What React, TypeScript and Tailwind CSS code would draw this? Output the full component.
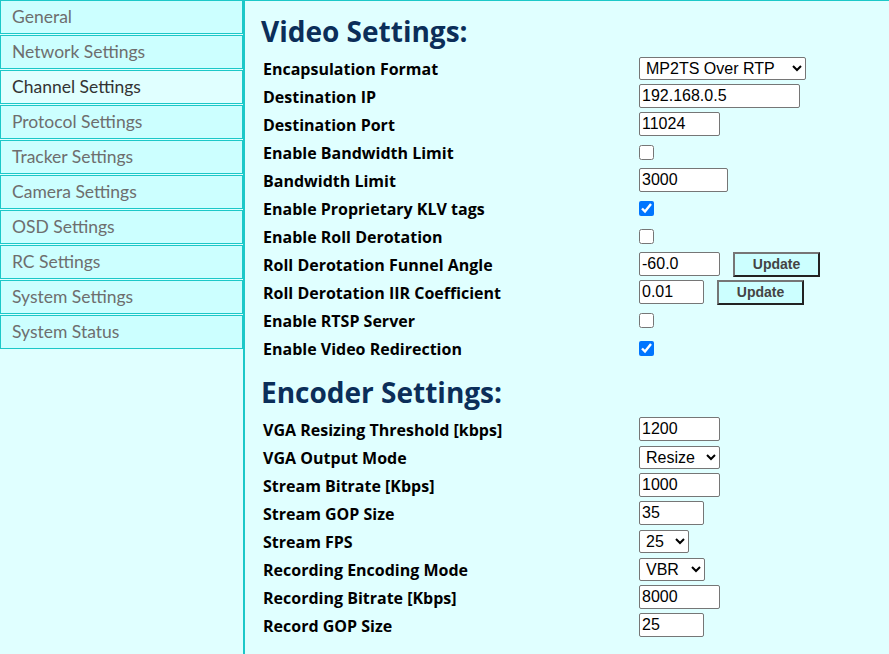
import React from "react";

const menu = [
  "General",
  "Network Settings",
  "Channel Settings",
  "Protocol Settings",
  "Tracker Settings",
  "Camera Settings",
  "OSD Settings",
  "RC Settings",
  "System Settings",
  "System Status",
];

type Field =
  | { kind: "text"; value: string; w: string; button?: boolean }
  | { kind: "select"; value: string; w: string }
  | { kind: "check"; checked: boolean };

type Row = { label: string; field: Field };

const videoRows: Row[] = [
  { label: "Encapsulation Format", field: { kind: "select", value: "MP2TS Over RTP", w: "w-[167px]" } },
  { label: "Destination IP", field: { kind: "text", value: "192.168.0.5", w: "w-[161px]" } },
  { label: "Destination Port", field: { kind: "text", value: "11024", w: "w-[81px]" } },
  { label: "Enable Bandwidth Limit", field: { kind: "check", checked: false } },
  { label: "Bandwidth Limit", field: { kind: "text", value: "3000", w: "w-[89px]" } },
  { label: "Enable Proprietary KLV tags", field: { kind: "check", checked: true } },
  { label: "Enable Roll Derotation", field: { kind: "check", checked: false } },
  { label: "Roll Derotation Funnel Angle", field: { kind: "text", value: "-60.0", w: "w-[81px]", button: true } },
  { label: "Roll Derotation IIR Coefficient", field: { kind: "text", value: "0.01", w: "w-[65px]", button: true } },
  { label: "Enable RTSP Server", field: { kind: "check", checked: false } },
  { label: "Enable Video Redirection", field: { kind: "check", checked: true } },
];

const encoderRows: Row[] = [
  { label: "VGA Resizing Threshold [kbps]", field: { kind: "text", value: "1200", w: "w-[81px]" } },
  { label: "VGA Output Mode", field: { kind: "select", value: "Resize", w: "w-[81px]" } },
  { label: "Stream Bitrate [Kbps]", field: { kind: "text", value: "1000", w: "w-[81px]" } },
  { label: "Stream GOP Size", field: { kind: "text", value: "35", w: "w-[65px]" } },
  { label: "Stream FPS", field: { kind: "select", value: "25", w: "w-[50px]" } },
  { label: "Recording Encoding Mode", field: { kind: "select", value: "VBR", w: "w-[66px]" } },
  { label: "Recording Bitrate [Kbps]", field: { kind: "text", value: "8000", w: "w-[81px]" } },
  { label: "Record GOP Size", field: { kind: "text", value: "25", w: "w-[65px]" } },
];

function FieldCell({ field }: { field: Field }) {
  if (field.kind === "check") {
    return (
      <input
        type="checkbox"
        defaultChecked={field.checked}
        className="w-[15px] h-[15px] m-0 accent-[#0075ff]"
      />
    );
  }
  if (field.kind === "select") {
    return (
      <select
        defaultValue={field.value}
        className={`${field.w} h-[23px] border border-[#767676] rounded-[2px] bg-white text-black text-[16px] pl-[2px]`}
      >
        <option>{field.value}</option>
      </select>
    );
  }
  return (
    <div className="flex items-center gap-[13px]">
      <input
        type="text"
        defaultValue={field.value}
        className={`${field.w} h-[24px] border border-[#767676] rounded-[2px] bg-white text-black text-[16px] px-[2px] outline-none`}
      />
      {field.button && (
        <button className="w-[87px] h-[25px] bg-[#ccffff] border-2 border-t-[#767676] border-l-[#767676] border-r-[#222] border-b-[#222] text-[14px] font-semibold text-[#444]">
          Update
        </button>
      )}
    </div>
  );
}

function Section({ title, rows }: { title: string; rows: Row[] }) {
  return (
    <div>
      <h2 className="h-[38px] flex items-center text-[28px] font-bold text-[#0b2e59] leading-none font-['Open_Sans',sans-serif]">
        {title}
      </h2>
      <div className="mt-[4px]">
        {rows.map((r) => (
          <div key={r.label} className="h-[28px] flex items-center">
            <div className="w-[378px] pl-[2px] pt-[1px] text-[16px] font-bold text-black font-['Open_Sans',sans-serif]">
              {r.label}
            </div>
            <FieldCell field={r.field} />
          </div>
        ))}
      </div>
    </div>
  );
}

export default function App() {
  return (
    <div className="w-[889px] h-[654px] flex bg-[#e0ffff] overflow-hidden font-['Liberation_Sans',Arial,sans-serif]">
      <div className="w-[243px] shrink-0">
        {menu.map((m) => (
          <div
            key={m}
            className={`h-[34px] mb-[1px] flex items-center pl-[11px] border border-[#1cc8c8] text-[17.5px] font-['Lato',sans-serif] ${
              m === "Channel Settings" ? "bg-[#e0ffff] text-[#333]" : "bg-[#ccffff] text-[#6e6e6e]"
            }`}
          >
            {m}
          </div>
        ))}
      </div>
      <div className="flex-1 border-l-2 border-t border-[#1cc8c8] pl-[16px] pt-[11px]">
        <Section title="Video Settings:" rows={videoRows} />
        <div className="mt-[11px]">
          <Section title="Encoder Settings:" rows={encoderRows} />
        </div>
      </div>
    </div>
  );
}
